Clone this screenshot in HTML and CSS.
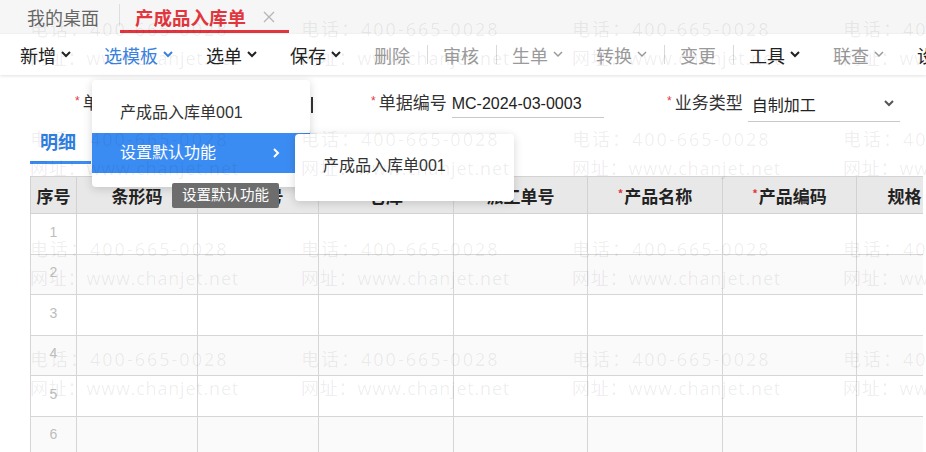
FILE: index.html
```html
<!DOCTYPE html>
<html lang="zh-CN">
<head>
  <meta charset="UTF-8">
  <meta name="viewport" content="width=device-width, initial-scale=1.0">
  <title>产成品入库单</title>
  <link rel="stylesheet" href="styles.css">
</head>
<body>
  <!-- 页签 -->
  <div class="tabbar">
    <div class="tab">我的桌面</div>
    <div class="tab tab-active">
      产成品入库单
      <svg class="tab-close" width="12" height="12" viewBox="0 0 12 12"><path d="M1 1L11 11M11 1L1 11" stroke="currentColor" stroke-width="1.3"/></svg>
    </div>
  </div>

  <!-- 工具栏 -->
  <div class="toolbar">
    <div class="tool">新增<svg class="chev" viewBox="0 0 10 7"><polyline points="1,1 5,5 9,1"/></svg></div>
    <div class="tool tool-open">
      选模板<svg class="chev" viewBox="0 0 10 7"><polyline points="1,1 5,5 9,1"/></svg>
      <div class="dropdown">
        <div class="menu-item">产成品入库单001</div>
        <div class="menu-item menu-item-active">
          设置默认功能
          <svg class="menu-arrow" viewBox="0 0 7 10"><polyline points="1,1 5,5 1,9"/></svg>
        </div>
        <div class="submenu">
          <div class="menu-item">产成品入库单001</div>
        </div>
        <div class="tooltip">设置默认功能</div>
      </div>
    </div>
    <div class="tool">选单<svg class="chev" viewBox="0 0 10 7"><polyline points="1,1 5,5 9,1"/></svg></div>
    <div class="tool">保存<svg class="chev" viewBox="0 0 10 7"><polyline points="1,1 5,5 9,1"/></svg></div>
    <div class="tool disabled">删除</div>
    <span class="sep"></span>
    <div class="tool disabled">审核</div>
    <span class="sep"></span>
    <div class="tool disabled">生单<svg class="chev" viewBox="0 0 10 7"><polyline points="1,1 5,5 9,1"/></svg></div>
    <div class="tool disabled">转换<svg class="chev" viewBox="0 0 10 7"><polyline points="1,1 5,5 9,1"/></svg></div>
    <span class="sep"></span>
    <div class="tool disabled">变更</div>
    <span class="sep"></span>
    <div class="tool">工具<svg class="chev" viewBox="0 0 10 7"><polyline points="1,1 5,5 9,1"/></svg></div>
    <div class="tool disabled">联查<svg class="chev" viewBox="0 0 10 7"><polyline points="1,1 5,5 9,1"/></svg></div>
    <div class="tool">设置</div>
  </div>

  <!-- 表头字段 -->
  <div class="form-row">
    <div class="field">
      <span class="req">*</span><label>单据日期</label>
      <div class="input input-focus">2024-03-15</div>
      <span class="caret"></span>
    </div>
    <div class="field">
      <span class="req">*</span><label>单据编号</label>
      <div class="input">MC-2024-03-0003</div>
    </div>
    <div class="field">
      <span class="req">*</span><label>业务类型</label>
      <div class="input select">
        自制加工
        <svg class="select-chev" viewBox="0 0 10 7"><polyline points="1,1 5,5 9,1"/></svg>
      </div>
    </div>
  </div>

  <div class="detail-tabs">
    <div class="detail-tab">明细</div>
  </div>

  <!-- 明细表格 -->
  <div class="grid-wrap">
    <table class="grid">
      <colgroup>
        <col style="width:46px"><col style="width:121px"><col style="width:121px"><col style="width:135px">
        <col style="width:134px"><col style="width:135px"><col style="width:134px"><col style="width:96px">
      </colgroup>
      <thead>
        <tr>
          <th>序号</th>
          <th>条形码</th>
          <th>批次号</th>
          <th>仓库</th>
          <th>派工单号</th>
          <th><span class="req">*</span>产品名称</th>
          <th><span class="req">*</span>产品编码</th>
          <th>规格</th>
        </tr>
      </thead>
      <tbody>
        <tr><td class="num">1</td><td></td><td></td><td></td><td></td><td></td><td></td><td></td></tr>
        <tr><td class="num">2</td><td></td><td></td><td></td><td></td><td></td><td></td><td></td></tr>
        <tr><td class="num">3</td><td></td><td></td><td></td><td></td><td></td><td></td><td></td></tr>
        <tr><td class="num">4</td><td></td><td></td><td></td><td></td><td></td><td></td><td></td></tr>
        <tr><td class="num">5</td><td></td><td></td><td></td><td></td><td></td><td></td><td></td></tr>
        <tr><td class="num">6</td><td></td><td></td><td></td><td></td><td></td><td></td><td></td></tr>
      </tbody>
    </table>
  </div>

  <!-- 水印 -->
  <div class="watermark">
    <div><span class="wm-tel">电话：400-665-0028</span><br><span class="wm-url">网址：www.chanjet.net</span></div>
    <div><span class="wm-tel">电话：400-665-0028</span><br><span class="wm-url">网址：www.chanjet.net</span></div>
    <div><span class="wm-tel">电话：400-665-0028</span><br><span class="wm-url">网址：www.chanjet.net</span></div>
    <div><span class="wm-tel">电话：400-665-0028</span><br><span class="wm-url">网址：www.chanjet.net</span></div>
    <div><span class="wm-tel">电话：400-665-0028</span><br><span class="wm-url">网址：www.chanjet.net</span></div>
    <div><span class="wm-tel">电话：400-665-0028</span><br><span class="wm-url">网址：www.chanjet.net</span></div>
    <div><span class="wm-tel">电话：400-665-0028</span><br><span class="wm-url">网址：www.chanjet.net</span></div>
    <div><span class="wm-tel">电话：400-665-0028</span><br><span class="wm-url">网址：www.chanjet.net</span></div>
    <div><span class="wm-tel">电话：400-665-0028</span><br><span class="wm-url">网址：www.chanjet.net</span></div>
    <div><span class="wm-tel">电话：400-665-0028</span><br><span class="wm-url">网址：www.chanjet.net</span></div>
    <div><span class="wm-tel">电话：400-665-0028</span><br><span class="wm-url">网址：www.chanjet.net</span></div>
    <div><span class="wm-tel">电话：400-665-0028</span><br><span class="wm-url">网址：www.chanjet.net</span></div>
    <div><span class="wm-tel">电话：400-665-0028</span><br><span class="wm-url">网址：www.chanjet.net</span></div>
    <div><span class="wm-tel">电话：400-665-0028</span><br><span class="wm-url">网址：www.chanjet.net</span></div>
    <div><span class="wm-tel">电话：400-665-0028</span><br><span class="wm-url">网址：www.chanjet.net</span></div>
    <div><span class="wm-tel">电话：400-665-0028</span><br><span class="wm-url">网址：www.chanjet.net</span></div>
  </div>
</body>
</html>
```

FILE: styles.css
```css
body {
  margin: 0;
  font-family: "Liberation Sans", "Noto Sans CJK SC", sans-serif;
  color: #333;
  background: #fff;
  overflow: hidden;
  position: relative;
  height: 452px;
}

/* 页签 */
.tabbar {
  height: 34px;
  background: #f6f6f6;
  display: flex;
  align-items: stretch;
}

.tab {
  display: flex;
  align-items: center;
  font-size: 18px;
  color: #666;
  padding: 0 20px 0 27px;
  position: relative;
  white-space: nowrap;
  flex-shrink: 0;
}

.tab-active {
  color: #e2363e;
  font-weight: bold;
  font-size: 18.5px;
  padding: 0 14px 0 15px;
  border-left: 1px solid transparent;
}

.tab-active::before {
  content: "";
  position: absolute;
  left: -1px;
  top: 4px;
  height: 22px;
  border-left: 1px solid #dedede;
}

.tab-active::after {
  content: "";
  position: absolute;
  left: 0;
  right: 0;
  bottom: 1px;
  height: 3px;
  background: #e2363e;
}

.tab-close {
  color: #b5b5b5;
  margin-left: 17px;
}

/* 工具栏 */
.toolbar {
  height: 41px;
  background: #fff;
  display: flex;
  align-items: center;
  padding-left: 20px;
  box-shadow: 0 1px 3px rgba(0,0,0,0.12);
  position: relative;
  z-index: 2;
  white-space: nowrap;
}

.tool {
  font-size: 18px;
  color: #222;
  display: flex;
  align-items: center;
  flex-shrink: 0;
}

.tool + .tool {
  margin-left: 33px;
}

.tool.disabled {
  color: #9a9a9a;
}

.tool-open {
  color: #3b82e0;
  position: relative;
}

.chev {
  width: 10px;
  height: 7px;
  margin-left: 5px;
  fill: none;
  stroke: currentColor;
  stroke-width: 2;
}

.tool.disabled .chev {
  stroke-width: 1.5;
}

.sep {
  width: 1px;
  height: 19px;
  background: #d9d9d9;
  margin: 0 15px 0 17px;
  flex-shrink: 0;
}

/* 选模板下拉 */
.dropdown {
  position: absolute;
  left: -12px;
  top: 38px;
  width: 218px;
  padding: 13px 0 14px;
  background: #fff;
  border-radius: 4px;
  box-shadow: 0 2px 10px rgba(0,0,0,0.16);
  font-size: 16px;
  color: #333;
}

.menu-item {
  height: 40px;
  line-height: 40px;
  padding-left: 28px;
  position: relative;
}

.menu-item-active {
  background: #3b8cf2;
  color: #fff;
}

.menu-arrow {
  position: absolute;
  left: 181px;
  top: 15px;
  width: 7px;
  height: 10px;
  fill: none;
  stroke: #fff;
  stroke-width: 2;
}

.submenu {
  position: absolute;
  left: 203px;
  top: 54px;
  width: 219px;
  padding: 12px 0 15px;
  background: #fff;
  border-radius: 4px;
  box-shadow: 0 2px 10px rgba(0,0,0,0.16);
}

.tooltip {
  position: absolute;
  left: 80px;
  top: 103px;
  width: 107px;
  height: 25px;
  line-height: 25px;
  text-align: center;
  background: #6d6d6d;
  color: #fff;
  font-size: 14.5px;
  border-radius: 2px;
}

/* 表头字段 */
.form-row {
  display: flex;
  height: 56px;
  padding: 16px 0 0 75px;
  box-sizing: border-box;
  white-space: nowrap;
}

.field {
  width: 296px;
  flex-shrink: 0;
  display: flex;
  align-items: flex-start;
  position: relative;
}

.field label {
  font-size: 17px;
  line-height: 26px;
  margin-right: 5px;
}

.req {
  color: #e2363e;
  font-size: 12px;
  line-height: 20px;
  margin-right: 3px;
}

.input {
  width: 152px;
  height: 26px;
  line-height: 26px;
  font-size: 16px;
  color: #222;
  border-bottom: 1px solid #c8c8c8;
}

.input-focus {
  border-bottom-color: #3b8cf2;
}

.caret {
  position: absolute;
  left: 236px;
  top: 6px;
  width: 2px;
  height: 16px;
  background: #333;
}

.select {
  height: 30px;
  line-height: 30px;
  display: flex;
  align-items: center;
  justify-content: space-between;
  padding-left: 4px;
  width: 148px;
}

.select-chev {
  width: 10px;
  height: 7px;
  margin-right: 6px;
  margin-top: -5px;
  fill: none;
  stroke: #555;
  stroke-width: 2;
}

/* 明细页签 */
.detail-tabs {
  height: 33px;
  padding-left: 30px;
  display: flex;
}

.detail-tab {
  font-size: 18px;
  font-weight: bold;
  color: #2f7ee0;
  padding: 0 15px 0 10px;
  line-height: 24px;
  border-bottom: 3px solid #3b8cf2;
  box-sizing: border-box;
  height: 33px;
}

/* 明细表格 */
.grid-wrap {
  margin: 12px 0 0 30px;
  width: 893px;
  overflow: hidden;
}

.grid {
  border-collapse: collapse;
  table-layout: fixed;
  width: 922px;
}

.grid th {
  height: 36px;
  padding: 0;
  background: #e8e8e8;
  border: 1px solid #d2d2d2;
  font-family: "Noto Sans CJK SC", sans-serif;
  font-size: 17px;
  font-weight: bold;
  color: #222;
  white-space: nowrap;
}

.grid th .req {
  font-size: 11px;
  vertical-align: top;
  margin-right: 1px;
}

.grid td {
  height: 39.5px;
  padding: 0;
  border: 1px solid #d6d6d6;
}

.grid tbody tr:nth-child(even) td {
  background: #fafafa;
}

.grid td.num {
  text-align: center;
  color: #bdbdbd;
  font-size: 14px;
  height: 35.5px;
  padding-bottom: 4px;
}

/* 水印 */
.watermark {
  position: absolute;
  left: 0;
  top: 0;
  right: 0;
  bottom: 0;
  padding: 15px 0 0 30px;
  display: grid;
  grid-template-columns: repeat(4, 271px);
  grid-auto-rows: 110px;
  font-family: "Open Sans", "Noto Sans CJK SC", sans-serif;
  font-size: 18px;
  line-height: 29px;
  color: rgba(0,0,0,0.07);
  white-space: nowrap;
  pointer-events: none;
  z-index: 10;
}

.wm-tel {
  letter-spacing: 2px;
}

.wm-url {
  letter-spacing: 0.8px;
}
```
